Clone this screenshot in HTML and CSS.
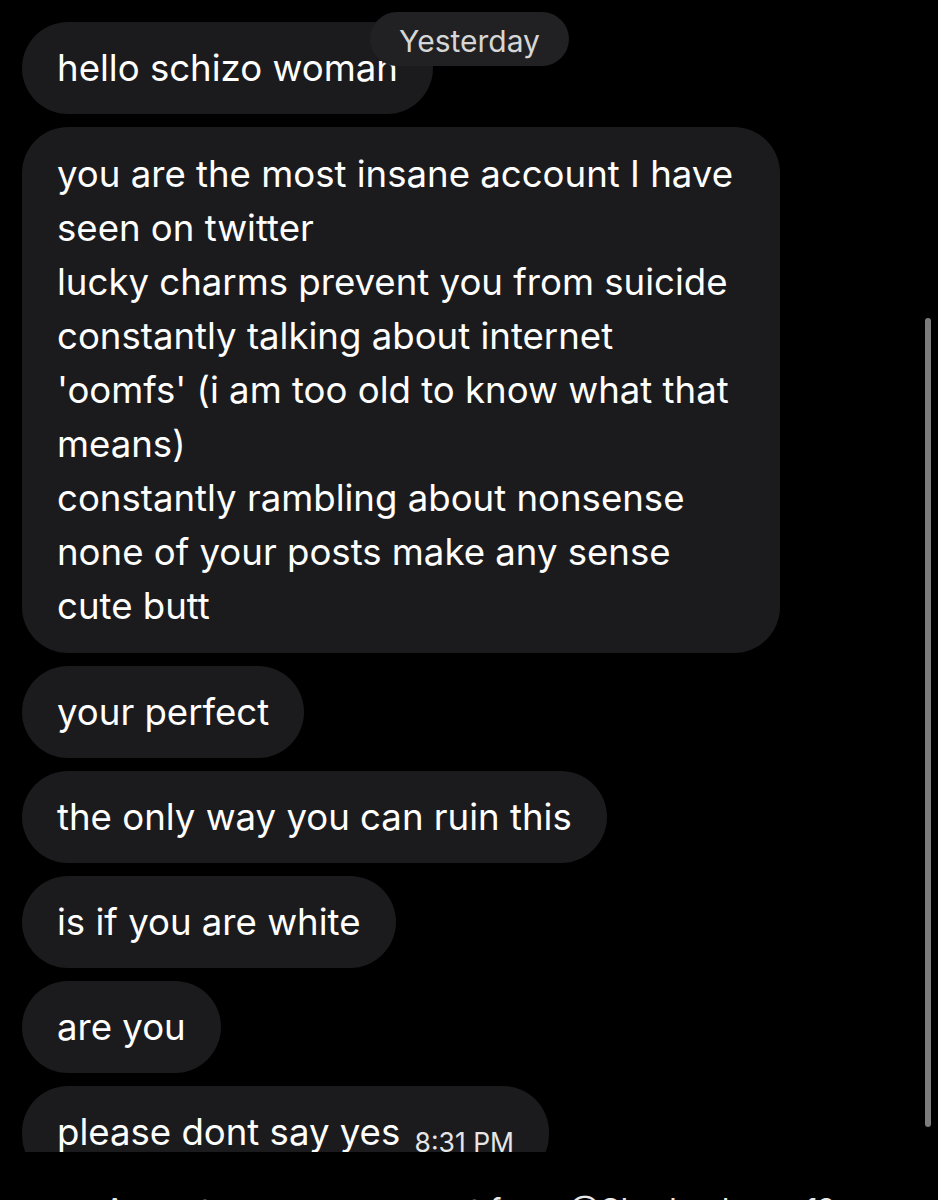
FILE: index.html
```html
<!DOCTYPE html>
<html lang="en">
<head>
<meta charset="utf-8">
<title>Chat</title>
<link rel="stylesheet" href="styles.css">
</head>
<body>
<div class="screen">
  <div class="chat">
    <div class="bubble">hello schizo woman</div>
    <div class="bubble bubble-wide">you are the most insane account I have seen on twitter
lucky charms prevent you from suicide
constantly talking about internet 'oomfs' (i am too old to know what that means)
constantly rambling about nonsense
none of your posts make any sense
cute butt</div>
    <div class="bubble">your perfect</div>
    <div class="bubble">the only way you can ruin this</div>
    <div class="bubble">is if you are white</div>
    <div class="bubble">are you</div>
    <div class="bubble">please dont say yes <span class="time">8:31 PM</span></div>
  </div>
  <div class="footer">Accept message request from @Shadowbeam1?</div>
  <div class="date-pill">Yesterday</div>
  <div class="scrollbar"></div>
</div>
</body>
</html>
```
FILE: styles.css
```css
html, body {
  margin: 0;
  padding: 0;
  background: #000;
}

.screen {
  position: relative;
  width: 938px;
  height: 1200px;
  overflow: hidden;
  background: #000;
  font-family: Inter, "Noto Sans", sans-serif;
  color: #fff;
}

.chat {
  height: 1130px;
  padding: 22px 0 0 22px;
  overflow: hidden;
  display: flex;
  flex-direction: column;
  align-items: flex-start;
  gap: 13px;
}

.bubble {
  box-sizing: border-box;
  flex: none;
  background: #1b1b1d;
  border-radius: 46px;
  padding: 19px 35px;
  font-size: 36.6px;
  line-height: 54px;
  white-space: pre-line;
  max-width: 758px;
}

.bubble-wide {
  width: 758px;
  padding: 20px 40px 20px 35px;
}

.time {
  font-size: 26.5px;
  color: #e6e6e6;
  margin-left: 4px;
  position: relative;
  top: 7px;
}

.footer {
  padding-top: 39px;
  font-size: 32px;
  line-height: 40px;
  text-align: center;
  color: #e8e8e8;
}

.date-pill {
  position: absolute;
  left: 370px;
  top: 12px;
  width: 199px;
  height: 54px;
  box-sizing: border-box;
  padding-top: 4px;
  border-radius: 27px;
  background: #212123;
  color: #d6d6d6;
  font-size: 30px;
  line-height: 50px;
  text-align: center;
}

.scrollbar {
  position: absolute;
  left: 925px;
  top: 318px;
  width: 6px;
  height: 809px;
  border-radius: 3px;
  background: #7c7c7c;
}
```
